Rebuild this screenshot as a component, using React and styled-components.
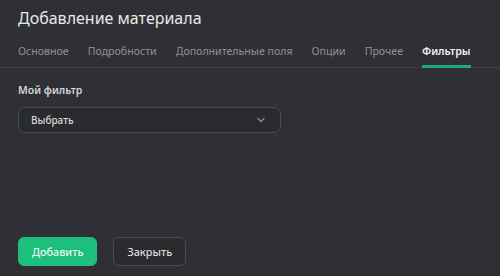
import styled, { createGlobalStyle } from "styled-components";

const GlobalStyle = createGlobalStyle`
  html, body {
    margin: 0;
    padding: 0;
    background: #2f3035;
  }
  * { box-sizing: border-box; }
`;

const tabs = ["Основное", "Подробности", "Дополнительные поля", "Опции", "Прочее", "Фильтры"];

export default function App() {
  return (
    <Page>
      <GlobalStyle />
      <Header>
        <Title>Добавление материала</Title>
        <Tabs>
          {tabs.map((t) => (
            <Tab key={t} $active={t === "Фильтры"}>
              {t}
            </Tab>
          ))}
        </Tabs>
      </Header>
      <Body>
        <Label>Мой фильтр</Label>
        <Select>
          <span>Выбрать</span>
          <svg width="12" height="12" viewBox="0 0 12 12" fill="none">
            <path d="M3 4.5l3 3 3-3" stroke="#8a8b90" strokeWidth="1.3" strokeLinecap="round" strokeLinejoin="round" />
          </svg>
        </Select>
      </Body>
      <Footer>
        <Button $primary>Добавить</Button>
        <Button>Закрыть</Button>
      </Footer>
    </Page>
  );
}

const Page = styled.div`
  width: 500px;
  height: 276px;
  display: flex;
  flex-direction: column;
  background: #2f3035;
  font-family: "Noto Sans", "Open Sans", sans-serif;
  overflow: hidden;
`;

const Header = styled.div`
  padding: 7px 18px 0;
  border-bottom: 1px solid #3d3e43;
`;

const Title = styled.div`
  font-size: 16px;
  line-height: 22px;
  color: #e9e9eb;
`;

const Tabs = styled.div`
  display: flex;
  gap: 19px;
  margin-top: 14px;
`;

const Tab = styled.div`
  font-size: 10.6px;
  line-height: 16px;
  white-space: nowrap;
  padding-bottom: 6px;
  color: ${(p) => (p.$active ? "#f2f2f3" : "#8f9095")};
  font-weight: ${(p) => (p.$active ? 600 : 400)};
  border-bottom: 3px solid ${(p) => (p.$active ? "#1fa874" : "transparent")};
  margin-bottom: -1px;
`;

const Body = styled.div`
  flex: 1;
  padding: 14px 18px 0;
`;

const Label = styled.div`
  font-size: 10.5px;
  font-weight: 600;
  color: #d6d6d8;
  line-height: 16px;
`;

const Select = styled.div`
  margin-top: 9px;
  width: 263px;
  height: 26px;
  border: 1.5px solid #4a4b50;
  border-radius: 7px;
  background: #2a2b2f;
  display: flex;
  align-items: center;
  justify-content: space-between;
  padding: 0 13px 0 12px;
  font-size: 10px;
  font-weight: 500;
  color: #d8d8da;
`;

const Footer = styled.div`
  display: flex;
  gap: 16px;
  padding: 0 18px 10px;
`;

const Button = styled.div`
  height: 29px;
  display: flex;
  align-items: center;
  justify-content: center;
  border-radius: 6px;
  font-size: 10.8px;
  font-weight: 500;
  padding: 0 13px;
  background: ${(p) => (p.$primary ? "#1ebf7c" : "#2a2b2f")};
  color: ${(p) => (p.$primary ? "#eafaf3" : "#dcdcde")};
  border: 1.5px solid ${(p) => (p.$primary ? "#1ebf7c" : "#4a4b50")};
`;
